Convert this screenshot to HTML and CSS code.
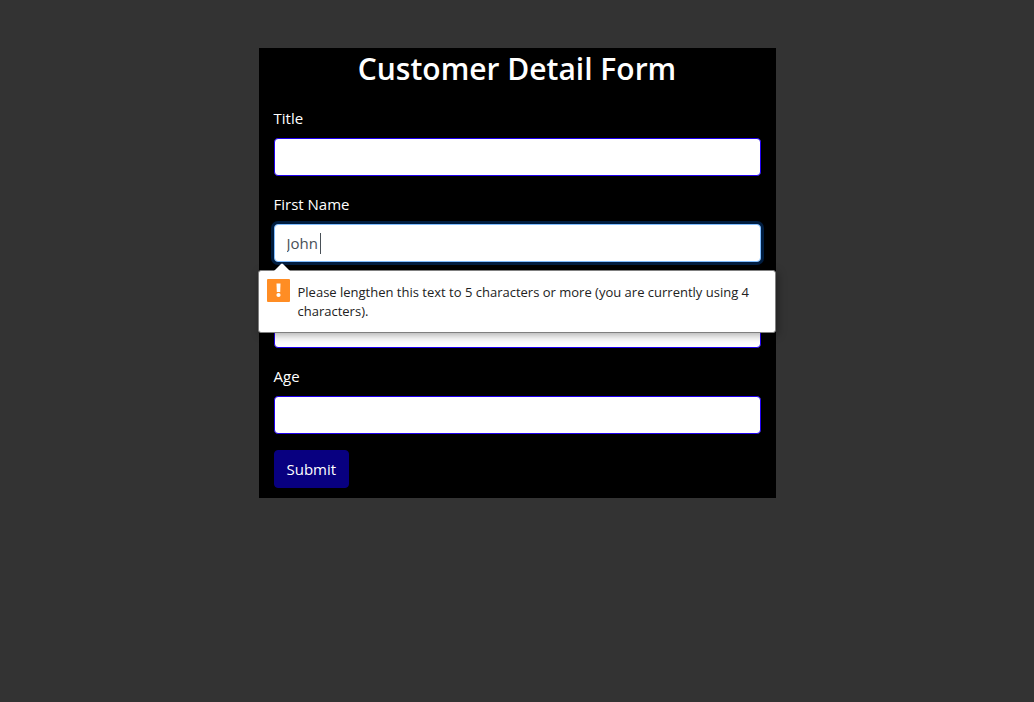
FILE: index.html
```html
<!DOCTYPE html>
<html lang="en">
<head>
<meta charset="utf-8">
<meta name="viewport" content="width=device-width, initial-scale=1">
<title>Customer Detail Form</title>
<link rel="stylesheet" href="styles.css">
</head>
<body>
<main class="panel">
  <h1 class="panel-title">Customer Detail Form</h1>
  <form class="form" novalidate>
    <div class="field">
      <label for="title">Title</label>
      <input class="control" id="title" type="text">
    </div>
    <div class="field">
      <label for="first-name">First Name</label>
      <div class="control-wrap">
        <input class="control control-active" id="first-name" type="text" value="John" minlength="5" aria-describedby="first-name-hint">
        <span class="caret" aria-hidden="true"></span>
        <div class="bubble" id="first-name-hint" role="alert">
          <svg class="bubble-arrow" viewBox="0 0 16 8" aria-hidden="true"><path d="M0 8 L7 1 Q8 0 9 1 L16 8 Z" fill="#fff"/></svg>
          <svg class="bubble-icon" viewBox="0 0 23 23" aria-hidden="true">
            <rect width="23" height="23" rx="1" fill="#ff8d24"/>
            <path d="M9.5 4.5h4l-.3 8.5h-3.4z" fill="#fff"/>
            <circle cx="11.5" cy="16" r="2.1" fill="#fff"/>
          </svg>
          <p class="bubble-text">Please lengthen this text to 5 characters or more (you are currently using 4 characters).</p>
        </div>
      </div>
    </div>
    <div class="field field-covered">
      <input class="control" id="last-name" type="text" aria-label="Last Name">
    </div>
    <div class="field">
      <label for="age">Age</label>
      <input class="control" id="age" type="text">
    </div>
    <button class="submit" type="submit">Submit</button>
  </form>
</main>
</body>
</html>
```
FILE: styles.css
```css
* {
  box-sizing: border-box;
}

body {
  margin: 0;
  background: #333;
  color: #fff;
  font-family: "Segoe UI", "Open Sans", "Noto Sans", sans-serif;
  font-size: 15px;
  line-height: 24px;
}

.panel {
  width: 50%;
  margin: 48px auto 0;
  padding: 0 15px 10px;
  background: #000;
}

.panel-title {
  margin: 0 0 16px;
  font-size: 30px;
  line-height: 42px;
  font-weight: 600;
  text-align: center;
}

.field {
  display: flex;
  flex-direction: column;
  gap: 8px;
  margin-bottom: 16px;
}

/* The label row of this field lies under the message bubble. */
.field-covered {
  padding-top: 32px;
}

.control-wrap {
  position: relative;
}

.control {
  display: block;
  width: 100%;
  height: 38px;
  padding: 6px 12px;
  border: 1px solid #2000f0;
  border-radius: 4px;
  background: #fff;
  color: #495057;
  font: inherit;
  outline: 0;
}

.control-active,
.control:focus {
  border-color: #80bdff;
  box-shadow: 0 0 0 3px rgba(0, 90, 200, 0.32);
}

.caret {
  position: absolute;
  left: 46px;
  top: 9px;
  width: 1px;
  height: 21px;
  background: #495057;
}

.bubble {
  position: absolute;
  z-index: 1;
  top: calc(100% + 8px);
  left: -16px;
  right: -15px;
  display: flex;
  gap: 8px;
  padding: 8px 16px 11px 8px;
  border: 1px solid #808080;
  border-radius: 3px;
  background: #fff;
  color: #222;
  box-shadow: 2px 2px 8px rgba(0, 0, 0, 0.35);
}

.bubble-arrow {
  position: absolute;
  top: -8px;
  left: 15px;
  width: 16px;
  height: 8px;
}

.bubble-icon {
  flex: none;
  width: 23px;
  height: 23px;
}

.bubble-text {
  margin: 4px 0 0;
  font-size: 13px;
  line-height: 19px;
}

.submit {
  display: block;
  height: 38px;
  padding: 6px 12px;
  border: 1px solid #080080;
  border-radius: 4px;
  background: #080080;
  color: #fff;
  font: inherit;
}
```
